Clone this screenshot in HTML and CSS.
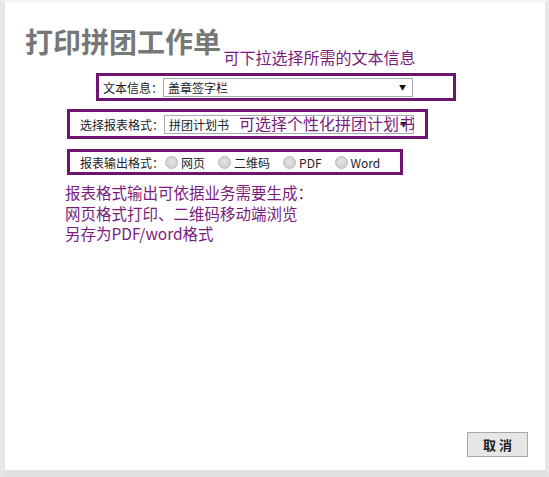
FILE: index.html
```html
<!DOCTYPE html>
<html lang="zh-CN">
<head>
    <meta charset="UTF-8">
    <title>打印拼团工作单</title>
    <link rel="stylesheet" href="styles.css">
</head>
<body>
    <div class="frame">
        <div class="header">
            <h1>打印拼团工作单</h1>
            <span class="tip tip-head">可下拉选择所需的文本信息</span>
        </div>

        <div class="box box-text">
            <label class="lbl">文本信息：</label>
            <div class="select">
                <span>盖章签字栏</span>
                <span class="arrow">▼</span>
            </div>
        </div>

        <div class="box box-format">
            <label class="lbl">选择报表格式：</label>
            <div class="select">
                <span>拼团计划书</span>
                <span class="arrow">▼</span>
                <span class="tip tip-over">可选择个性化拼团计划书</span>
            </div>
        </div>

        <div class="box box-output">
            <label class="lbl">报表输出格式：</label>
            <span class="radio"></span><span class="opt">网页</span>
            <span class="radio"></span><span class="opt">二维码</span>
            <span class="radio"></span><span class="opt">PDF</span>
            <span class="radio"></span><span class="opt">Word</span>
        </div>

        <p class="note">报表格式输出可依据业务需要生成：<br>网页格式打印、二维码移动端浏览<br>另存为PDF/word格式</p>

        <div class="footer">
            <button class="btn">取 消</button>
        </div>
    </div>
</body>
</html>
```

FILE: styles.css
```css
body {
    margin: 0;
    font-family: "Liberation Sans", "Noto Sans CJK SC", sans-serif;
    background: #fff;
}
.frame {
    box-sizing: border-box;
    width: 549px;
    height: 477px;
    border-left: 5px solid #e6e6e6;
    border-right: 4px solid #e6e6e6;
    border-bottom: 7px solid #e2e2e2;
    border-top: 2px solid #f4f4f4;
    display: flex;
    flex-direction: column;
}
.header {
    padding: 22px 0 0 20px;
    height: 46px;
}
h1 {
    display: inline;
    margin: 0;
    font-size: 28px;
    font-weight: bold;
    color: #777;
    font-family: "Noto Sans CJK SC", sans-serif;
    line-height: 34px;
}
.tip {
    color: #7a1c7c;
    font-size: 16px;
    font-family: "Noto Sans CJK SC", sans-serif;
    white-space: nowrap;
}
.tip-head {
    position: relative;
    top: 11px;
    margin-left: -2px;
}
.box {
    box-sizing: border-box;
    border: 3px solid #6c1470;
    display: flex;
    align-items: center;
    font-size: 12px;
    color: #222;
    font-family: "Noto Sans CJK SC", sans-serif;
}
.box-text {
    margin: 3px 0 0 91px;
    width: 360px;
    height: 28px;
    padding-left: 4px;
}
.box-format {
    margin: 8px 0 0 62px;
    width: 361px;
    height: 30px;
    padding-left: 10px;
}
.box-output {
    margin: 10px 0 0 62px;
    width: 336px;
    height: 26px;
    padding-left: 10px;
}
.lbl {
    white-space: nowrap;
}
.select {
    position: relative;
    box-sizing: border-box;
    width: 250px;
    height: 19px;
    border: 1px solid #a5acb5;
    display: flex;
    align-items: center;
    padding-left: 4px;
    background: #fff;
}
.arrow {
    position: absolute;
    right: 6px;
    top: 3px;
    font-size: 7px;
    color: #111;
}
.tip-over {
    position: absolute;
    left: 74px;
    top: -5px;
}
.radio {
    display: inline-block;
    width: 11px;
    height: 11px;
    border-radius: 50%;
    border: 1px solid #b9b9b9;
    background: radial-gradient(circle at 50% 45%, #e4e4e4, #c9c9c9);
    margin: 0 3px 0 1px;
}
.opt {
    margin-right: 12px;
}
.note {
    margin: 7px 0 0 60px;
    font-size: 15.5px;
    line-height: 20.5px;
    color: #7a1c7c;
    font-family: "Noto Sans CJK SC", sans-serif;
}
.footer {
    margin-top: auto;
    display: flex;
    justify-content: flex-end;
    padding: 0 17px 13px 0;
}
.btn {
    width: 61px;
    height: 25px;
    background: #e6e6e6;
    border: 1px solid #a8a8a8;
    font-size: 13px;
    font-weight: bold;
    color: #222;
    font-family: "Noto Sans CJK SC", sans-serif;
    padding: 0;
}
```
